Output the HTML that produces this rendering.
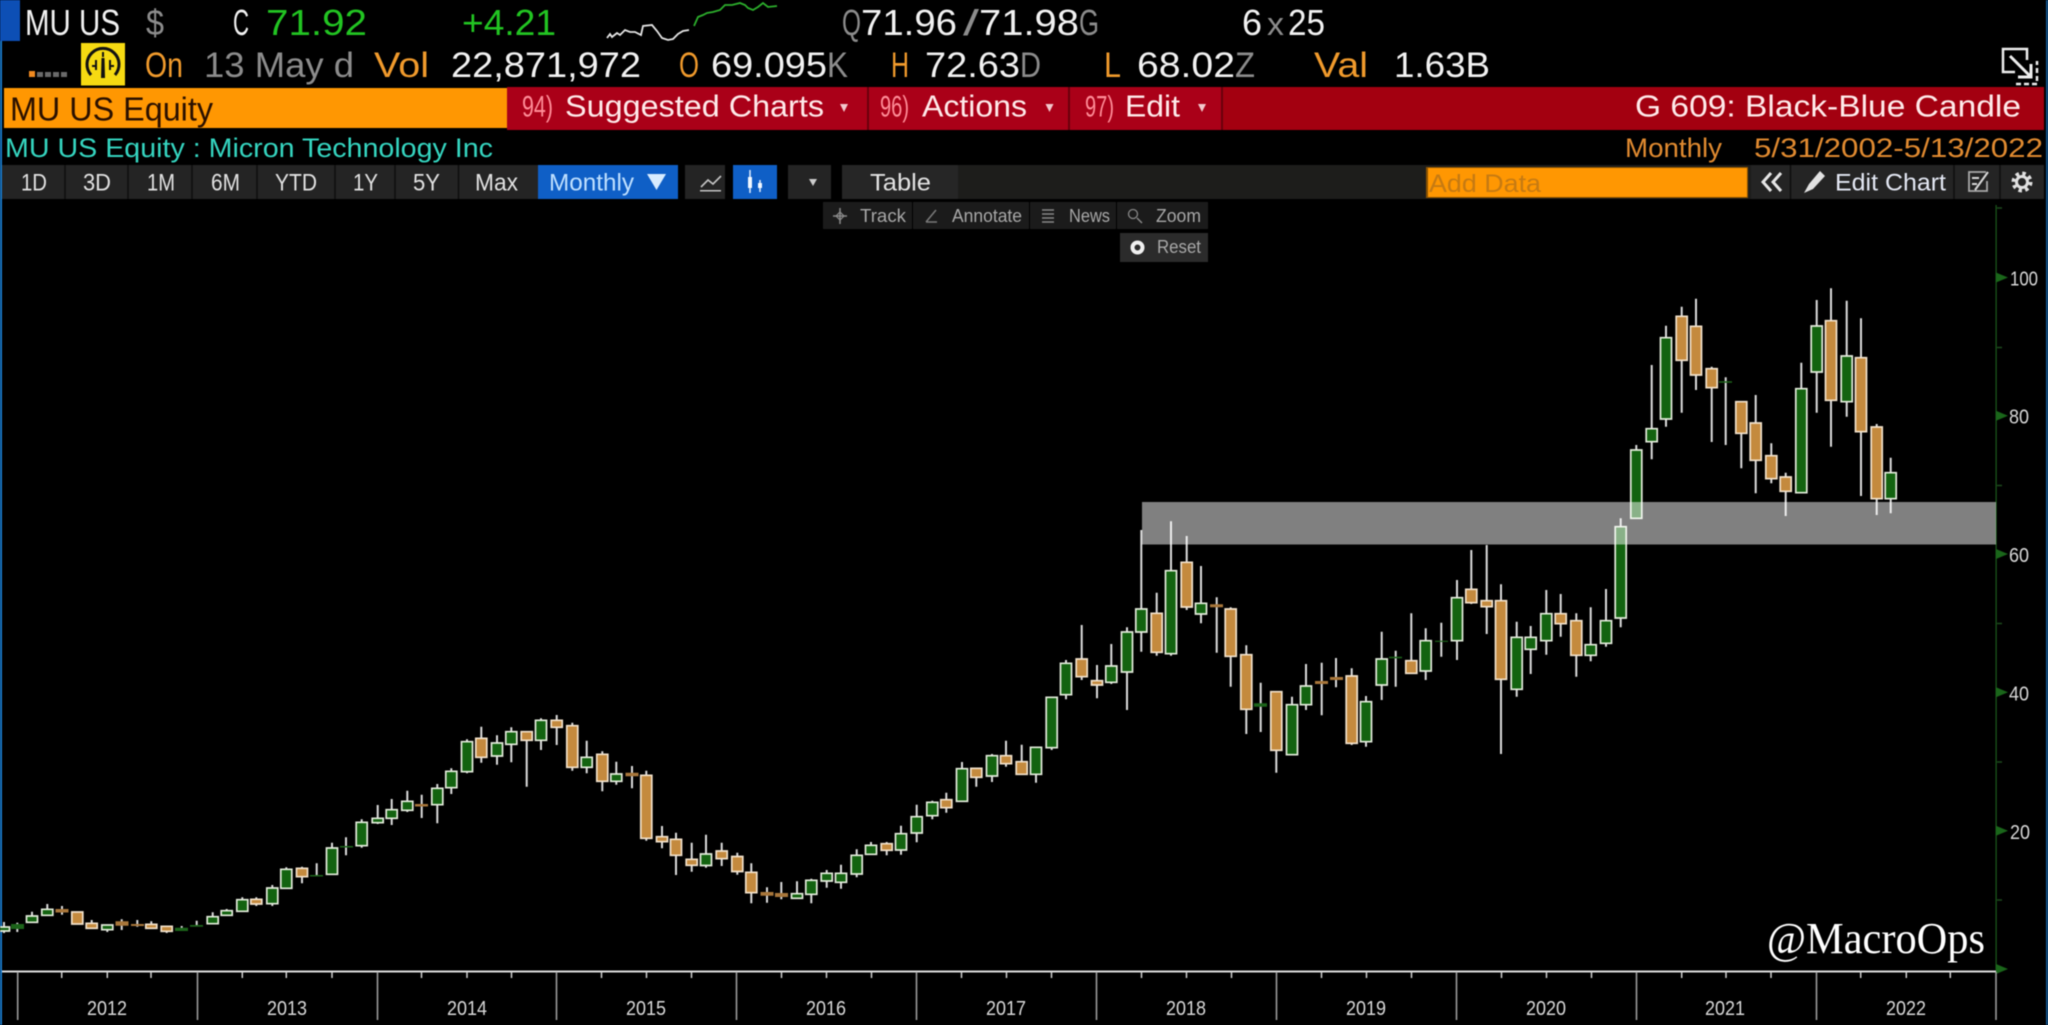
<!DOCTYPE html>
<html>
<head>
<meta charset="utf-8">
<title>MU US Equity</title>
<style>
html,body{margin:0;padding:0;background:#000;width:2048px;height:1025px;overflow:hidden}
svg{display:block;filter:blur(.4px)}
text{font-family:"Liberation Sans",sans-serif;white-space:pre}
.w{fill:#f2f2f2}.g{fill:#8c8c8c}.o{fill:#f09a2c}.gr{fill:#22c422}
.r1{font-size:36px}.r2{font-size:35px}.bar{font-size:31px;fill:#ffeaea}.pk{font-size:30px;fill:#ff8d98}
.tb{font-size:24px;fill:#e2e2e2}.st{font-size:18px;fill:#a8a8a8}.ax{font-size:20px;fill:#d8d8d8}
</style>
</head>
<body>
<svg width="2048" height="1025" viewBox="0 0 2048 1025" xmlns="http://www.w3.org/2000/svg">
<rect width="2048" height="1025" fill="#000"/>
<rect x="0" y="0" width="20" height="41" fill="#0d4fb5"/>
<rect x="0" y="41" width="2" height="984" fill="#1878c8"/>
<rect x="2046" y="0" width="2" height="1025" fill="#14568f"/>

<!-- row 1 -->
<g class="r1">
<text class="w r1" x="25" y="35" textLength="95" lengthAdjust="spacingAndGlyphs">MU US</text>
<text class="g r1" x="146" y="35" textLength="18" lengthAdjust="spacingAndGlyphs">$</text>
<text class="w r1" x="233" y="35" textLength="16" lengthAdjust="spacingAndGlyphs">C</text>
<text class="gr r1" x="266" y="35" textLength="101" lengthAdjust="spacingAndGlyphs">71.92</text>
<text class="gr r1" x="462" y="35" textLength="94" lengthAdjust="spacingAndGlyphs">+4.21</text>
<text class="g r1" x="842" y="35" textLength="19" lengthAdjust="spacingAndGlyphs">Q</text>
<text class="w r1" x="861" y="35" textLength="96" lengthAdjust="spacingAndGlyphs">71.96</text>
<text class="g r1" x="963" y="35" textLength="16" lengthAdjust="spacingAndGlyphs">/</text>
<text class="w r1" x="979" y="35" textLength="100" lengthAdjust="spacingAndGlyphs">71.98</text>
<text class="g r1" x="1079" y="35" textLength="20" lengthAdjust="spacingAndGlyphs">G</text>
<text class="w r1" x="1242" y="35" textLength="20" lengthAdjust="spacingAndGlyphs">6</text>
<text class="g" x="1267" y="35" font-size="32" textLength="17" lengthAdjust="spacingAndGlyphs">x</text>
<text class="w r1" x="1288" y="35" textLength="37" lengthAdjust="spacingAndGlyphs">25</text>
</g>
<polyline fill="none" stroke="#e4e4e4" stroke-width="1.800" points="607,38 610,34 612,37 617,33 620,35 625,30 630,32 635,32 641,35 643,26 652,25 657,31 662,38 668,40 673,39 678,34 683,31 689,30"/>
<polyline fill="none" stroke="#2cae2c" stroke-width="1.800" points="694,26 698,17 703,15 707,13 713,12 720,10 725,5 732,5 740,3 745,5 748,8 753,10 758,7 763,3 768,7 777,6"/>

<!-- row 2 -->
<rect x="29" y="71" width="6" height="6" fill="#f08a20"/>
<rect x="37" y="72" width="6" height="5" fill="#6a6a6a"/><rect x="45" y="72" width="6" height="5" fill="#6a6a6a"/><rect x="53" y="72" width="6" height="5" fill="#6a6a6a"/><rect x="61" y="72" width="6" height="5" fill="#6a6a6a"/>
<rect x="81" y="43" width="44" height="42.500" fill="#f6da12"/>
<path d="M91 75A16 16 0 1 1 115 75" fill="none" stroke="#111" stroke-width="3"/>
<path d="M96 60V70M110 60V70M92 66H96M114 66H110M103 52V57" fill="none" stroke="#111" stroke-width="2"/>
<polygon points="101.500,58 104.500,58 105,78 101,78" fill="#111"/>
<text class="o r2" x="145" y="77" textLength="38" lengthAdjust="spacingAndGlyphs">On</text>
<text class="g r2" x="204" y="77" textLength="150" lengthAdjust="spacingAndGlyphs">13 May d</text>
<text class="o r2" x="374" y="77" textLength="55" lengthAdjust="spacingAndGlyphs">Vol</text>
<text class="w r2" x="451" y="77" textLength="190" lengthAdjust="spacingAndGlyphs">22,871,972</text>
<text class="o r2" x="679" y="77" textLength="20" lengthAdjust="spacingAndGlyphs">O</text>
<text class="w r2" x="711" y="77" textLength="116" lengthAdjust="spacingAndGlyphs">69.095</text>
<text class="g r2" x="827" y="77" textLength="21" lengthAdjust="spacingAndGlyphs">K</text>
<text class="o r2" x="891" y="77" textLength="18" lengthAdjust="spacingAndGlyphs">H</text>
<text class="w r2" x="925" y="77" textLength="95" lengthAdjust="spacingAndGlyphs">72.63</text>
<text class="g r2" x="1020" y="77" textLength="21" lengthAdjust="spacingAndGlyphs">D</text>
<text class="o r2" x="1104" y="77" textLength="17" lengthAdjust="spacingAndGlyphs">L</text>
<text class="w r2" x="1137" y="77" textLength="98" lengthAdjust="spacingAndGlyphs">68.02</text>
<text class="g r2" x="1235" y="77" textLength="20" lengthAdjust="spacingAndGlyphs">Z</text>
<text class="o r2" x="1314" y="77" textLength="54" lengthAdjust="spacingAndGlyphs">Val</text>
<text class="w r2" x="1394" y="77" textLength="96" lengthAdjust="spacingAndGlyphs">1.63B</text>
<!-- corner icon -->
<path d="M2015 72H2003V49H2027V60" fill="none" stroke="#eee" stroke-width="2.500"/>
<path d="M2016 84H2037V61" fill="none" stroke="#eee" stroke-width="2.500" stroke-dasharray="5 3"/>
<path d="M2010 56L2030 76M2031 64V77H2018" fill="none" stroke="#eee" stroke-width="3"/>

<!-- command bar -->
<rect x="4" y="88" width="503" height="40" fill="#ff9702"/>
<text x="10" y="120.500" font-size="33" fill="#2a1000" textLength="203" lengthAdjust="spacingAndGlyphs">MU US Equity</text>
<rect x="507" y="87" width="1537" height="43" fill="#a30010"/>
<rect x="507" y="87" width="714" height="43" fill="#aa0018"/>
<rect x="867" y="87" width="2" height="43" fill="#6a000c"/><rect x="1068" y="87" width="2" height="43" fill="#6a000c"/><rect x="1221" y="87" width="2" height="43" fill="#6a000c"/>
<text class="pk" x="522" y="116.500" textLength="31" lengthAdjust="spacingAndGlyphs">94)</text>
<text class="bar" x="565" y="116.500" textLength="259" lengthAdjust="spacingAndGlyphs">Suggested Charts</text>
<polygon points="840,104 848,104 844,112" fill="#f2c8cc"/>
<text class="pk" x="880" y="116.500" textLength="29" lengthAdjust="spacingAndGlyphs">96)</text>
<text class="bar" x="922" y="116.500" textLength="105" lengthAdjust="spacingAndGlyphs">Actions</text>
<polygon points="1045.500,104 1053.500,104 1049.500,112" fill="#f2c8cc"/>
<text class="pk" x="1085" y="116.500" textLength="29" lengthAdjust="spacingAndGlyphs">97)</text>
<text class="bar" x="1125" y="116.500" textLength="55" lengthAdjust="spacingAndGlyphs">Edit</text>
<polygon points="1198,104 1206,104 1202,112" fill="#f2c8cc"/>
<text class="bar" x="1635" y="116.500" textLength="386" lengthAdjust="spacingAndGlyphs">G 609: Black-Blue Candle</text>

<!-- title -->
<text x="5" y="157" font-size="27" fill="#35d5c0" textLength="488" lengthAdjust="spacingAndGlyphs">MU US Equity : Micron Technology Inc</text>
<text x="1625" y="157" font-size="27" fill="#e08a30" textLength="97" lengthAdjust="spacingAndGlyphs">Monthly</text>
<text x="1754" y="157" font-size="27" fill="#e08a30" textLength="289" lengthAdjust="spacingAndGlyphs">5/31/2002-5/13/2022</text>

<!-- toolbar -->
<rect x="2" y="165" width="2042" height="34" fill="#1d1d1b"/>
<rect x="2" y="165" width="536" height="34" fill="#242424"/>
<path d="M65 165V199M128 165V199M192 165V199M257 165V199M335 165V199M395 165V199M458.500 165V199" stroke="#0e0e0e" stroke-width="1.500"/>
<rect x="538" y="165" width="140" height="34" fill="#0f5fc6"/>
<rect x="678" y="165" width="7" height="34" fill="#000"/>
<rect x="685" y="165" width="40" height="34" fill="#242424"/>
<rect x="725" y="165" width="8" height="34" fill="#000"/>
<rect x="733" y="165" width="44" height="34" fill="#0f5fc6"/>
<rect x="777" y="165" width="11" height="34" fill="#000"/>
<rect x="788" y="165" width="43" height="34" fill="#242424"/>
<rect x="831" y="165" width="11" height="34" fill="#000"/>
<rect x="842" y="165" width="116" height="34" fill="#262626"/>
<text class="tb" x="21" y="190.500" textLength="26" lengthAdjust="spacingAndGlyphs">1D</text>
<text class="tb" x="83" y="190.500" textLength="28" lengthAdjust="spacingAndGlyphs">3D</text>
<text class="tb" x="147" y="190.500" textLength="28" lengthAdjust="spacingAndGlyphs">1M</text>
<text class="tb" x="211" y="190.500" textLength="29" lengthAdjust="spacingAndGlyphs">6M</text>
<text class="tb" x="275" y="190.500" textLength="42" lengthAdjust="spacingAndGlyphs">YTD</text>
<text class="tb" x="353" y="190.500" textLength="25" lengthAdjust="spacingAndGlyphs">1Y</text>
<text class="tb" x="413" y="190.500" textLength="27" lengthAdjust="spacingAndGlyphs">5Y</text>
<text class="tb" x="475" y="190.500" textLength="43" lengthAdjust="spacingAndGlyphs">Max</text>
<text x="549" y="190.500" font-size="24" fill="#bfe0ff" textLength="85" lengthAdjust="spacingAndGlyphs">Monthly</text>
<polygon points="647,174 666,174 656.500,190" fill="#d8ecff"/>
<path d="M701 187L708 180L713 184L721 176" fill="none" stroke="#c4c4c4" stroke-width="1.600"/>
<rect x="700" y="190" width="21" height="1.500" fill="#c4c4c4"/>
<path d="M750 170V193M760 180V192" stroke="#dfeeff" stroke-width="1.500"/>
<rect x="748" y="177" width="4" height="11" fill="#f2f8ff"/><rect x="758" y="183" width="4" height="5" fill="#f2f8ff"/>
<polygon points="809,179 817,179 813,186" fill="#ccc"/>
<text class="tb" x="870" y="190.500" textLength="61" lengthAdjust="spacingAndGlyphs">Table</text>

<rect x="1426" y="167" width="322" height="31" fill="#8a5200"/>
<rect x="1428" y="168" width="319" height="29" fill="#ff9702"/>
<text x="1429" y="192" font-size="25" fill="#c67a12" textLength="112" lengthAdjust="spacingAndGlyphs">Add Data</text>
<rect x="1751" y="165" width="293" height="34" fill="#242424"/>
<path d="M1790.500 165V199M1954 165V199M2000 165V199" stroke="#0e0e0e" stroke-width="1.500"/>
<path d="M1771 173L1763 182L1771 191M1781 173L1773 182L1781 191" fill="none" stroke="#e6e6e6" stroke-width="3"/>
<path d="M1809 184L1820 171L1825 176L1813 189L1804 193Z" fill="#e2e2e2"/>
<text x="1835" y="190.500" font-size="24" fill="#e4e8f4" textLength="111" lengthAdjust="spacingAndGlyphs">Edit Chart</text>
<path d="M1986 172H1969V191H1987V181" fill="none" stroke="#a8a8a8" stroke-width="1.800"/>
<path d="M1972 178H1979M1972 184H1977M1975 190L1988 172" fill="none" stroke="#d8d8d8" stroke-width="2"/>
<circle cx="2022" cy="182" r="8.500" fill="none" stroke="#e0e0e0" stroke-width="4" stroke-dasharray="3.400 3.280"/>
<circle cx="2022" cy="182" r="5.500" fill="none" stroke="#e0e0e0" stroke-width="3"/>

<!-- sub toolbar -->
<rect x="823" y="202" width="89" height="27" fill="#1b1b1b"/>
<rect x="913" y="202" width="116" height="27" fill="#1b1b1b"/>
<rect x="1030" y="202" width="86" height="27" fill="#1b1b1b"/>
<rect x="1117" y="202" width="91" height="27" fill="#1b1b1b"/>
<rect x="1120" y="233" width="88" height="29" fill="#2b2b2b"/>
<path d="M840 208V224M833 216H847" stroke="#8a8a8a" stroke-width="1.500"/>
<path d="M836 216L840 212L844 216L840 220Z" fill="none" stroke="#8a8a8a" stroke-width="1.200"/>
<text class="st" x="860" y="222" textLength="46" lengthAdjust="spacingAndGlyphs">Track</text>
<path d="M926 222L936 210M926 222H937" fill="none" stroke="#7a7a7a" stroke-width="1.500"/>
<text class="st" x="952" y="222" textLength="70" lengthAdjust="spacingAndGlyphs">Annotate</text>
<path d="M1042 210H1054M1042 214H1054M1042 218H1054M1042 222H1054" stroke="#888" stroke-width="1.600"/>
<text class="st" x="1069" y="222" textLength="41" lengthAdjust="spacingAndGlyphs">News</text>
<circle cx="1133" cy="214" r="4.500" fill="none" stroke="#888" stroke-width="1.300"/>
<path d="M1137 218L1142 223" stroke="#888" stroke-width="1.500"/>
<text class="st" x="1156" y="222" textLength="45" lengthAdjust="spacingAndGlyphs">Zoom</text>
<circle cx="1137.500" cy="247.500" r="5" fill="none" stroke="#f0f0f0" stroke-width="4"/>
<text class="st" x="1157" y="253" textLength="44" lengthAdjust="spacingAndGlyphs">Reset</text>

<!-- axes -->
<rect x="1995.500" y="205" width="1.200" height="765" fill="#1c5a1c"/>
<path d="M1996 272.500L2008 277.500L1996 282.500ZM1996 410.700L2008 415.700L1996 420.700ZM1996 549L2008 554L1996 559ZM1996 687.300L2008 692.300L1996 697.300ZM1996 825.700L2008 830.700L1996 835.700ZM1996 964L2008 969L1996 974Z" fill="#1a661a"/>
<path d="M1997 347.500H2002M1997 485.500H2002M1997 623.500H2002M1997 762H2002M1997 900H2002M1997 208H2002" stroke="#1c4a1c" stroke-width="1.500"/>
<text class="ax" x="2010" y="285.500" textLength="28" lengthAdjust="spacingAndGlyphs">100</text>
<text class="ax" x="2009" y="423.500" textLength="20" lengthAdjust="spacingAndGlyphs">80</text>
<text class="ax" x="2009" y="562" textLength="20" lengthAdjust="spacingAndGlyphs">60</text>
<text class="ax" x="2009" y="700.500" textLength="20" lengthAdjust="spacingAndGlyphs">40</text>
<text class="ax" x="2010" y="839" textLength="20" lengthAdjust="spacingAndGlyphs">20</text>
<rect x="2" y="970.500" width="1994" height="2" fill="#dcdcdc"/>
<path d="M17.700 972V1020M197.500 972V1020M377.500 972V1020M556.500 972V1020M736.500 972V1020M916.500 972V1020M1096.500 972V1020M1276.500 972V1020M1456.500 972V1020M1636.500 972V1020M1816.500 972V1020M1996 972V1020" stroke="#9a9a9a" stroke-width="1.600"/>
<path d="M61.700 972V978M107.300 972V978M151 972V978M242.300 972V978M286.300 972V978M332 972V978M421.500 972V978M467 972V978M511.500 972V978M601.500 972V978M646.500 972V978M691.500 972V978M781.500 972V978M826.500 972V978M871.500 972V978M961.500 972V978M1006.500 972V978M1051.500 972V978M1141.500 972V978M1186.500 972V978M1231.500 972V978M1321.500 972V978M1366.500 972V978M1411.500 972V978M1501.500 972V978M1546.500 972V978M1591.500 972V978M1681.700 972V978M1726 972V978M1771 972V978M1860.700 972V978M1906.300 972V978M1950.300 972V978" stroke="#cfcfcf" stroke-width="1.500"/>
<text class="ax" x="87" y="1015" textLength="40" lengthAdjust="spacingAndGlyphs">2012</text>
<text class="ax" x="267" y="1015" textLength="40" lengthAdjust="spacingAndGlyphs">2013</text>
<text class="ax" x="447" y="1015" textLength="40" lengthAdjust="spacingAndGlyphs">2014</text>
<text class="ax" x="626" y="1015" textLength="40" lengthAdjust="spacingAndGlyphs">2015</text>
<text class="ax" x="806" y="1015" textLength="40" lengthAdjust="spacingAndGlyphs">2016</text>
<text class="ax" x="986" y="1015" textLength="40" lengthAdjust="spacingAndGlyphs">2017</text>
<text class="ax" x="1166" y="1015" textLength="40" lengthAdjust="spacingAndGlyphs">2018</text>
<text class="ax" x="1346" y="1015" textLength="40" lengthAdjust="spacingAndGlyphs">2019</text>
<text class="ax" x="1526" y="1015" textLength="40" lengthAdjust="spacingAndGlyphs">2020</text>
<text class="ax" x="1705" y="1015" textLength="40" lengthAdjust="spacingAndGlyphs">2021</text>
<text class="ax" x="1886" y="1015" textLength="40" lengthAdjust="spacingAndGlyphs">2022</text>

<!-- wicks -->
<path fill="none" stroke="#dcdcdc" stroke-width="2" d="M4 922V933M17.300 922.700V932M32 911.700V917M47.300 904V910M62 906V914.700M91.700 920V924M107.300 928V932M121.700 919.300V930M137.300 920V926.700M151.300 921.300V925M166.700 929V933M181.700 926V929M196.700 920.700V926M212.700 912.300V917M226.700 909V911M242.300 897.300V900M256.300 897.300V906M272.300 885V906M286.300 867.300V870M302 866.700V883.300M316.700 863.300V876M332 842.700V849M346 837.300V855.300M361.700 819.300V847.700M377.700 805V824M391.700 799V825M407.300 790.700V812M421.700 794.700V818M437.300 784V823.300M451.300 768.300V794M467 739.300V773.300M481.300 726.700V762.700M497 735.300V764.700M511.300 727.300V762.300M526.700 731V786.700M541 718.300V750M556.700 715V745M572.300 722.700V770.700M586.700 740.700V773.300M602.300 751.300V791.300M616.300 761.700V784.700M632 766V788.300M646.300 770.700V840.700M662 826V848.300M676 832.700V875M691.700 842.700V871.700M706 834.700V867.700M721.700 842.700V866M737.300 852.700V874.700M751.300 863.300V903.300M767 887.300V902.700M781.300 882V899.300M797 881.300V895M811.300 878.700V903.300M826.700 870V887.700M841 864.700V888.700M856.700 849.300V877.300M871 842V847M886.700 842V855.300M901 825.700V854.700M916.700 804.700V842.300M932.300 800.700V819.300M946.300 792.700V812.700M962 762V802M976.300 768V786.700M992 754V782M1006 740.700V766.700M1021.700 744.700V762M1036 774V782.700M1051.700 747V750M1066 660V699.300M1081.700 625V680M1097 665V698.300M1111.300 644V684M1127 627.300V710M1141.300 530V651.700M1156.700 592.700V655.700M1171 521.300V655.700M1186.700 536V610M1201 566V623.300M1216.700 597.300V652.700M1230.700 607.300V686.700M1246.300 645.300V734M1260.700 682.700V732M1276.300 750V772.700M1292 696.700V706M1306 664V710M1321.700 662.700V715.300M1336 658V687.300M1351.700 668.300V745M1366 696V746.700M1381.700 631.700V700M1395.700 650.700V686.700M1411.300 613.300V662M1425.700 628.300V680M1441.300 622.700V656.700M1457 580V660M1471.300 550V604M1486.700 545V634M1501 584.300V754M1516.700 621.700V696.700M1530.700 626V674M1546.300 590V654.700M1560.700 594V636.700M1576.300 613.300V676.700M1590.700 607.300V661.300M1606 589V646.700M1620.700 518.300V627.300M1636.300 445V451M1651.700 365V459.300M1666 325.700V426.700M1681.700 306.700V412.700M1696 298.700V390M1711.700 366.700V442M1725.700 377.300V445M1741.300 432V468.300M1755.700 395V493.300M1771.300 443.300V483.300M1785.700 472.700V516M1801.300 362.700V390M1816.700 300V412.700M1831 288.300V446.700M1846.700 300.700V416.700M1861 318.300V496M1876.700 424V515M1890.700 457.700V513.300"/>

<!-- bodies -->
<g transform="translate(.5 0)">
<path fill="#136310" stroke="#e4ecdc" stroke-width="1.700" d="M-2 927h11V931h-11zM26 916h11V922.300h-11zM41.300 909.300h11V915.300h-11zM101.300 925h11V929.700h-11zM206.700 916.700h11V923.700h-11zM220.700 910.700h11V915.300h-11zM236.300 899.700h11V911.300h-11zM266.300 888h11V903.700h-11zM280.300 869.300h11V888.300h-11zM326 848h11V874.300h-11zM355.700 822.300h11V845.700h-11zM371.700 818.300h11V822.700h-11zM385.700 809.700h11V818.300h-11zM401.300 801.300h11V810.300h-11zM431.300 788.300h11V804.700h-11zM445.300 771.300h11V787.700h-11zM461 741.700h11V771.700h-11zM491 743h11V756h-11zM505.300 731.700h11V744.300h-11zM535 720.300h11V740.300h-11zM580.700 757.300h11V767.300h-11zM610.300 774h11V781.300h-11zM700 854h11V865.500h-11zM791 893.700h11V898.300h-11zM805.300 880.300h11V894.300h-11zM820.700 873.300h11V881h-11zM835 873.300h11V882.300h-11zM850.700 855.300h11V874h-11zM865 845.300h11V854.300h-11zM895 833.700h11V850h-11zM910.700 816.700h11V833h-11zM926.300 802.300h11V815.700h-11zM956 768.700h11V801.300h-11zM986 755.700h11V776h-11zM1030 747.300h11V774.300h-11zM1045.700 697.300h11V747.700h-11zM1060 663.300h11V694.700h-11zM1105.300 666h11V682.300h-11zM1121 632h11V672h-11zM1135.300 609h11V632h-11zM1165 570.700h11V653.700h-11zM1195 603.300h11V614h-11zM1286 704.700h11V754.700h-11zM1300 686h11V704.700h-11zM1360 701.700h11V741.700h-11zM1375.700 659h11V685h-11zM1419.700 640.700h11V671h-11zM1451 597.700h11V640.700h-11zM1510.700 637.300h11V689.300h-11zM1524.700 637.300h11V649.300h-11zM1540.300 613.700h11V640.700h-11zM1584.700 644.700h11V655.300h-11zM1600 620.700h11V643.300h-11zM1614.700 526.700h11V618h-11zM1630.300 450h11V518.300h-11zM1645.700 428.700h11V441.700h-11zM1660 337.700h11V419h-11zM1795.300 388.700h11V492.700h-11zM1810.700 326h11V372h-11zM1840.700 356h11V401.700h-11zM1884.700 472.700h11V498.700h-11z"/>
<path fill="#c48a3e" stroke="#f2e2cc" stroke-width="1.700" d="M71.300 912h11V924h-11zM85.700 923.300h11V928.300h-11zM145.300 924.300h11V928.300h-11zM160.700 926.300h11V931.300h-11zM250.300 899.300h11V904h-11zM296 868.300h11V876.700h-11zM475.300 738.300h11V757.300h-11zM520.700 731.700h11V740.300h-11zM550.700 720.300h11V727.300h-11zM566.300 725.700h11V767.300h-11zM596.300 754.300h11V781.300h-11zM640.300 775.300h11V838.300h-11zM656 836.700h11V841.700h-11zM670 839.300h11V855.300h-11zM685.700 859.300h11V865.300h-11zM715.700 851h11V858.700h-11zM731.300 856.500h11V871.500h-11zM745.300 872.300h11V892.700h-11zM880.700 843.700h11V850.300h-11zM940.300 799.700h11V807.700h-11zM970.300 768.300h11V777.300h-11zM1000 755.700h11V763.700h-11zM1015.700 761.700h11V774.300h-11zM1075.700 659h11V676.700h-11zM1091 680.700h11V685h-11zM1150.700 613.300h11V652.300h-11zM1180.700 562.300h11V607h-11zM1224.700 609h11V656.300h-11zM1240.300 654.700h11V709.300h-11zM1270.300 691.700h11V750.300h-11zM1345.700 676h11V743.300h-11zM1405.300 660.700h11V673.300h-11zM1465.300 589.300h11V602.700h-11zM1480.700 600.700h11V606.700h-11zM1495 600.700h11V679.300h-11zM1554.700 613.700h11V623.700h-11zM1570.300 620.700h11V655.300h-11zM1675.700 316.300h11V360.300h-11zM1690 326.300h11V375h-11zM1705.700 368.700h11V387.700h-11zM1735.300 401.700h11V433.300h-11zM1749.700 423h11V460.300h-11zM1765.300 455.700h11V478.700h-11zM1779.700 477h11V491.300h-11zM1825 320.700h11V400.300h-11zM1855 357.700h11V431.700h-11zM1870.700 427h11V498.700h-11z"/>
</g>
<!-- dojis -->
<path fill="#a8763a" d="M55.500 909h13v3.500h-13zM115.500 921.300h13v4.500h-13zM131 924h13v2h-13zM415 804h13v2.500h-13zM625.500 772.700h13v3.500h-13zM760.500 892h13v3.700h-13zM775 893h13v4h-13zM1210 604.300h13v3h-13zM1315 681h13v3h-13zM1330 677h13v3h-13z"/>
<path fill="#1c641a" d="M11 924h13v5h-13zM175 927.700h13v3.300h-13zM190 925h13v1.700h-13zM310 875h13v1.500h-13zM340 846h13v1.500h-13zM1254 703.300h13v3.400h-13zM1389 656.700h13v1.500h-13zM1435 640.700h13v1.200h-13zM1719 381.300h13v1.500h-13z"/>

<!-- highlight band -->
<rect x="1142" y="502" width="854" height="42.500" fill="#fff" fill-opacity=".5"/>

<text x="1767" y="953" font-size="44" fill="#fff" style="font-family:'Liberation Serif',serif" textLength="218" lengthAdjust="spacingAndGlyphs">@MacroOps</text>
</svg>
</body>
</html>
